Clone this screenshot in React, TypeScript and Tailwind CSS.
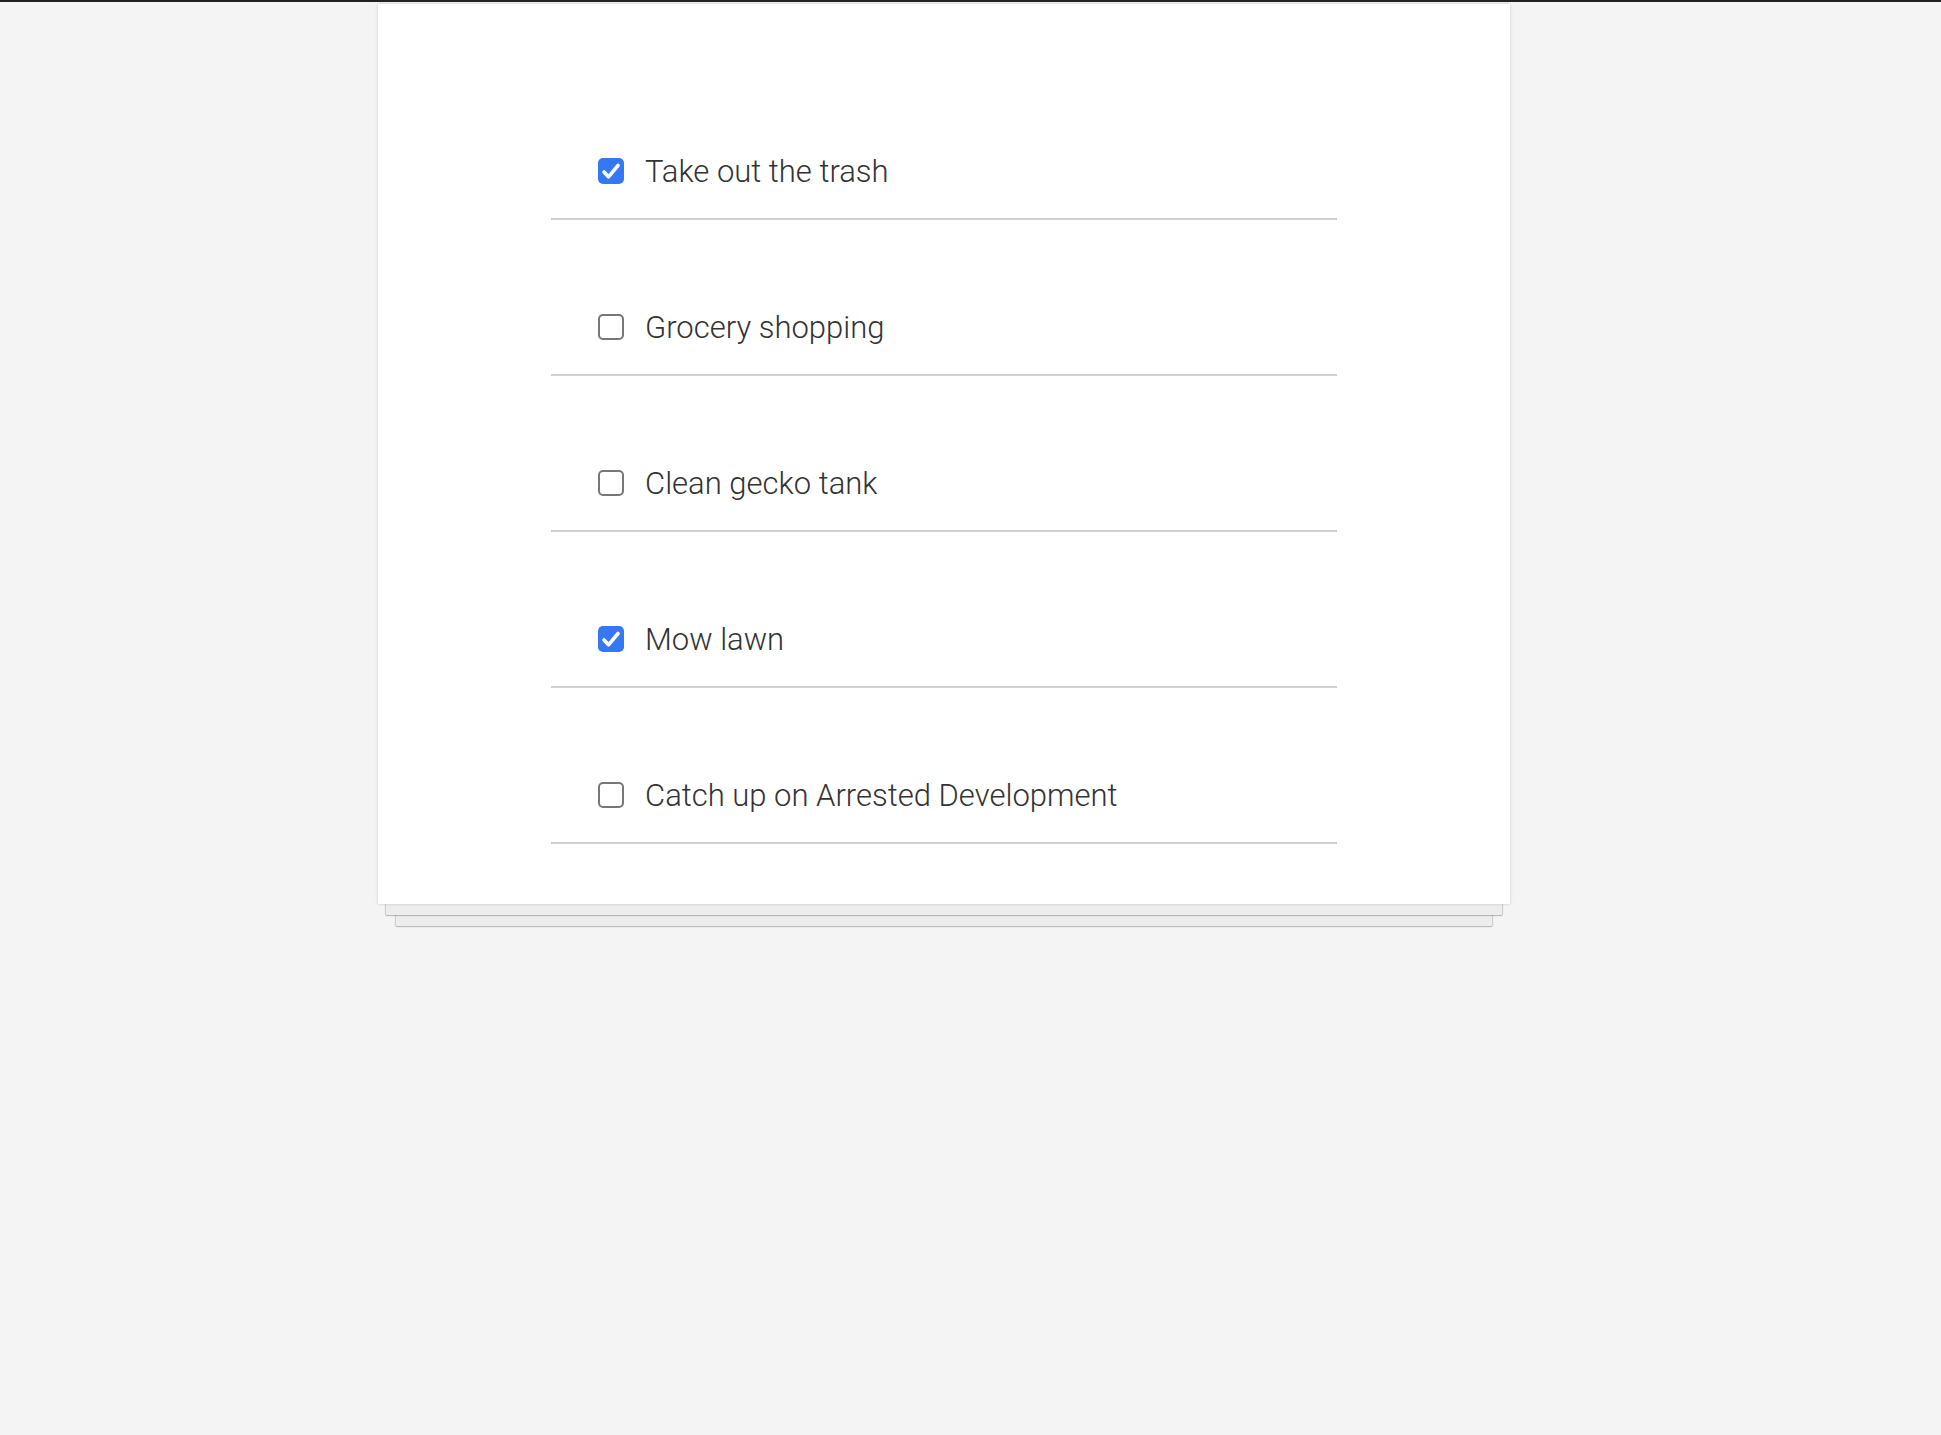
import { useState } from 'react';

interface Todo {
    id: number;
    title: string;
    done: boolean;
}

const initialTodos: Todo[] = [
    { id: 1, title: 'Take out the trash', done: true },
    { id: 2, title: 'Grocery shopping', done: false },
    { id: 3, title: 'Clean gecko tank', done: false },
    { id: 4, title: 'Mow lawn', done: true },
    { id: 5, title: 'Catch up on Arrested Development', done: false },
];

function Checkbox({ checked, onToggle }: { checked: boolean; onToggle: () => void }) {
    return (
        <button
            type="button"
            onClick={onToggle}
            className={
                checked
                    ? 'flex h-[26px] w-[26px] shrink-0 items-center justify-center rounded-[5px] bg-[#3478f6]'
                    : 'flex h-[26px] w-[26px] shrink-0 items-center justify-center rounded-[5px] border-2 border-[#777777] bg-white'
            }
        >
            {checked && (
                <svg width="26" height="26" viewBox="0 0 26 26">
                    <path d="M6 14 L10.5 18.8 L20 7.5" fill="none" stroke="white" strokeWidth="3.6" strokeLinecap="round" strokeLinejoin="round" />
                </svg>
            )}
        </button>
    );
}

export default function App() {
    const [todos, setTodos] = useState<Todo[]>(initialTodos);

    const toggle = (id: number) => {
        setTodos((prev) => prev.map((t) => (t.id === id ? { ...t, done: !t.done } : t)));
    };

    return (
        <div className="min-h-[1435px] bg-[#f4f4f4]" style={{ fontFamily: 'Roboto, "Liberation Sans", Arial, sans-serif' }}>
            <div className="h-[2px] bg-[#222222]" />

            <div className="ml-[378px] mt-[2px] w-[1132px]">
                {/* main sheet */}
                <div className="relative z-20 bg-white py-[60px] shadow-[0_0_3px_rgba(0,0,0,0.18)]">
                    <ul className="mx-auto w-[786px]">
                        {todos.map((todo) => (
                            <li key={todo.id} className="flex h-[156px] items-center border-b-2 border-[#d0d0d0] pt-[59px] pl-[47px]">
                                <Checkbox checked={todo.done} onToggle={() => toggle(todo.id)} />
                                <span className="relative top-[1px] ml-[21px] text-[31px] font-light leading-[37px] text-[#333333]">{todo.title}</span>
                            </li>
                        ))}
                    </ul>
                </div>

                {/* stacked sheets */}
                <div className="relative z-10 mx-[8px] h-[11px] bg-[#ededed] shadow-[0_1px_1px_rgba(0,0,0,0.2),-1px_0_1px_rgba(0,0,0,0.12),1px_0_1px_rgba(0,0,0,0.12)]" />
                <div className="mx-[18px] h-[11px] bg-[#ededed] shadow-[0_1px_1px_rgba(0,0,0,0.2),-1px_0_1px_rgba(0,0,0,0.12),1px_0_1px_rgba(0,0,0,0.12)]" />
            </div>
        </div>
    );
}
